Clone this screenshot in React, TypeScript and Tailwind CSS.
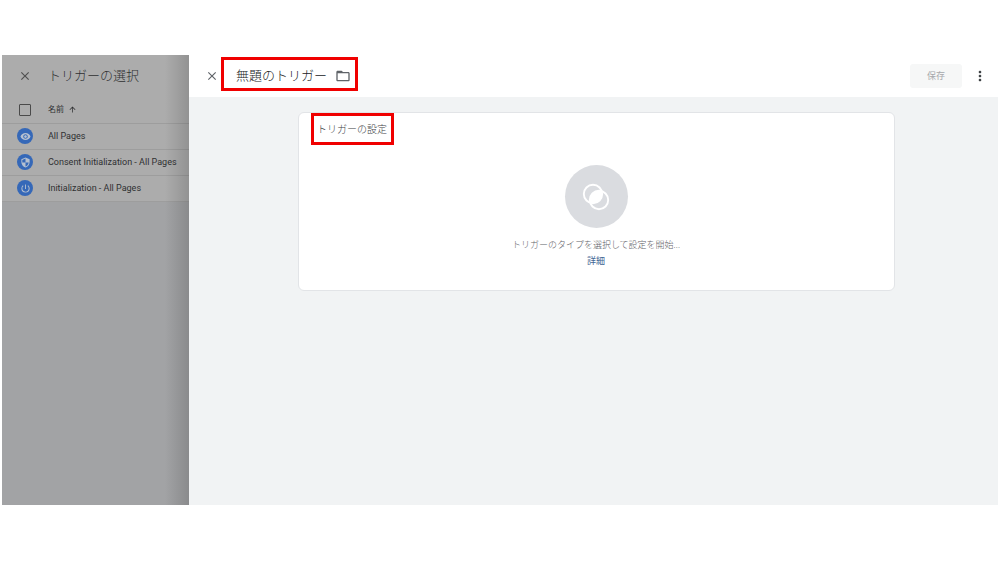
import { useState } from "react"
import { MdArrowUpward, MdClose, MdFolderOpen, MdMoreVert, MdPowerSettingsNew, MdSecurity, MdVisibility } from "react-icons/md"

const triggers = [
  { name: "All Pages", icon: MdVisibility },
  { name: "Consent Initialization - All Pages", icon: MdSecurity },
  { name: "Initialization - All Pages", icon: MdPowerSettingsNew },
]

function TriggerList() {
  const [allSelected, setAllSelected] = useState(false)

  return (
    <aside className="relative w-[187px] shrink-0 overflow-hidden bg-[#a2a3a5] text-[#2f3032]">
      <div className="bg-[#acacac]">
        <header className="flex h-[42px] items-center">
          <button type="button" aria-label="閉じる" className="flex w-[46px] justify-center text-[#505050]">
            <MdClose className="size-[14px]" />
          </button>
          <h2 className="text-[13px] leading-5 font-light whitespace-nowrap">トリガーの選択</h2>
        </header>
        <table className="w-full table-fixed border-collapse text-left text-[9px] leading-3">
          <thead>
            <tr className="h-[26px] border-b border-[#9d9d9d]">
              <th className="w-[46px] p-0">
                <input
                  type="checkbox"
                  aria-label="すべて選択"
                  checked={allSelected}
                  onChange={(e) => setAllSelected(e.target.checked)}
                  className="mx-auto block size-3 appearance-none rounded-[1px] border border-[#4a4a4a] checked:bg-[#3568b8]"
                />
              </th>
              <th className="p-0 text-[8px] font-normal">
                <button type="button" className="flex items-center gap-1">
                  名前
                  <MdArrowUpward className="size-[9px]" />
                </button>
              </th>
            </tr>
          </thead>
          <tbody>
            {triggers.map(({ name, icon: Icon }) => (
              <tr key={name} className="h-[26px] border-b border-[#9d9d9d]">
                <td className="p-0">
                  <span className="mx-auto flex size-4 items-center justify-center rounded-full bg-[#3568b8] text-[#b5c0d0]">
                    <Icon className="size-[11px]" />
                  </span>
                </td>
                <td className="p-0 whitespace-nowrap">{name}</td>
              </tr>
            ))}
          </tbody>
        </table>
      </div>
      {/* Shadow cast by the editor panel */}
      <div className="pointer-events-none absolute inset-y-0 right-0 w-6 bg-linear-to-r from-transparent to-black/15" />
    </aside>
  )
}

function TriggerTypeIcon() {
  return (
    <span className="flex size-[63px] items-center justify-center rounded-full bg-[#dadce0]">
      <svg viewBox="0 0 28 28" className="size-7" fill="none" stroke="#fff" strokeWidth="1.9">
        <defs>
          <clipPath id="overlap">
            <circle cx="11" cy="11" r="9.2" />
          </clipPath>
        </defs>
        <circle cx="17" cy="17" r="9.2" fill="#fff" stroke="none" clipPath="url(#overlap)" />
        <circle cx="11" cy="11" r="9.2" />
        <circle cx="17" cy="17" r="9.2" />
      </svg>
    </span>
  )
}

function TriggerEditor() {
  return (
    <main className="flex min-w-0 flex-1 flex-col bg-[#f1f3f4]">
      <header className="flex h-[42px] items-center bg-white pr-[10px]">
        <button type="button" aria-label="閉じる" className="flex w-8 justify-end pr-[2px] text-[#5f6368]">
          <MdClose className="size-[14px]" />
        </button>
        <div className="mb-1 flex h-[34px] items-center gap-2 border-3 border-[#f00000] pt-1 pr-1 pl-3">
          <h1 className="text-[13px] leading-5 font-light whitespace-nowrap text-[#202124]">無題のトリガー</h1>
          <button type="button" aria-label="フォルダ" className="text-[#5f6368]">
            <MdFolderOpen className="size-4" />
          </button>
        </div>
        <button
          type="button"
          disabled
          className="ml-auto h-6 w-[52px] rounded-[3px] bg-[#f6f7f7] pt-px text-[9px] text-[#a6a8ac]"
        >
          保存
        </button>
        <button type="button" aria-label="その他" className="ml-[10px] text-[#3c4043]">
          <MdMoreVert className="size-4" />
        </button>
      </header>
      <div className="pt-[15px] pl-[5px]">
        <section className="mx-auto min-h-[179px] max-w-[597px] rounded-md border border-[#e2e4e7] bg-white pl-3">
          <h2 className="flex h-8 w-[83px] items-center justify-center border-3 border-[#f00000] pt-[2px] text-[10px] leading-4 font-light whitespace-nowrap text-[#3c4043]">
            トリガーの設定
          </h2>
          <div className="flex flex-col items-center pt-5 pr-3 text-[9px] leading-4">
            <TriggerTypeIcon />
            <p className="pt-[9px] font-light text-[#5f6368]">トリガーのタイプを選択して設定を開始...</p>
            <a href="#details" className="text-[#3f6694]">
              詳細
            </a>
          </div>
        </section>
      </div>
    </main>
  )
}

export default function App() {
  return (
    <div
      lang="ja"
      className="flex min-h-screen flex-col bg-white px-[2px] pt-[55px] pb-[57px] font-['Roboto','Noto_Sans_CJK_JP',sans-serif]"
    >
      <div className="flex flex-1">
        <TriggerList />
        <TriggerEditor />
      </div>
    </div>
  )
}
